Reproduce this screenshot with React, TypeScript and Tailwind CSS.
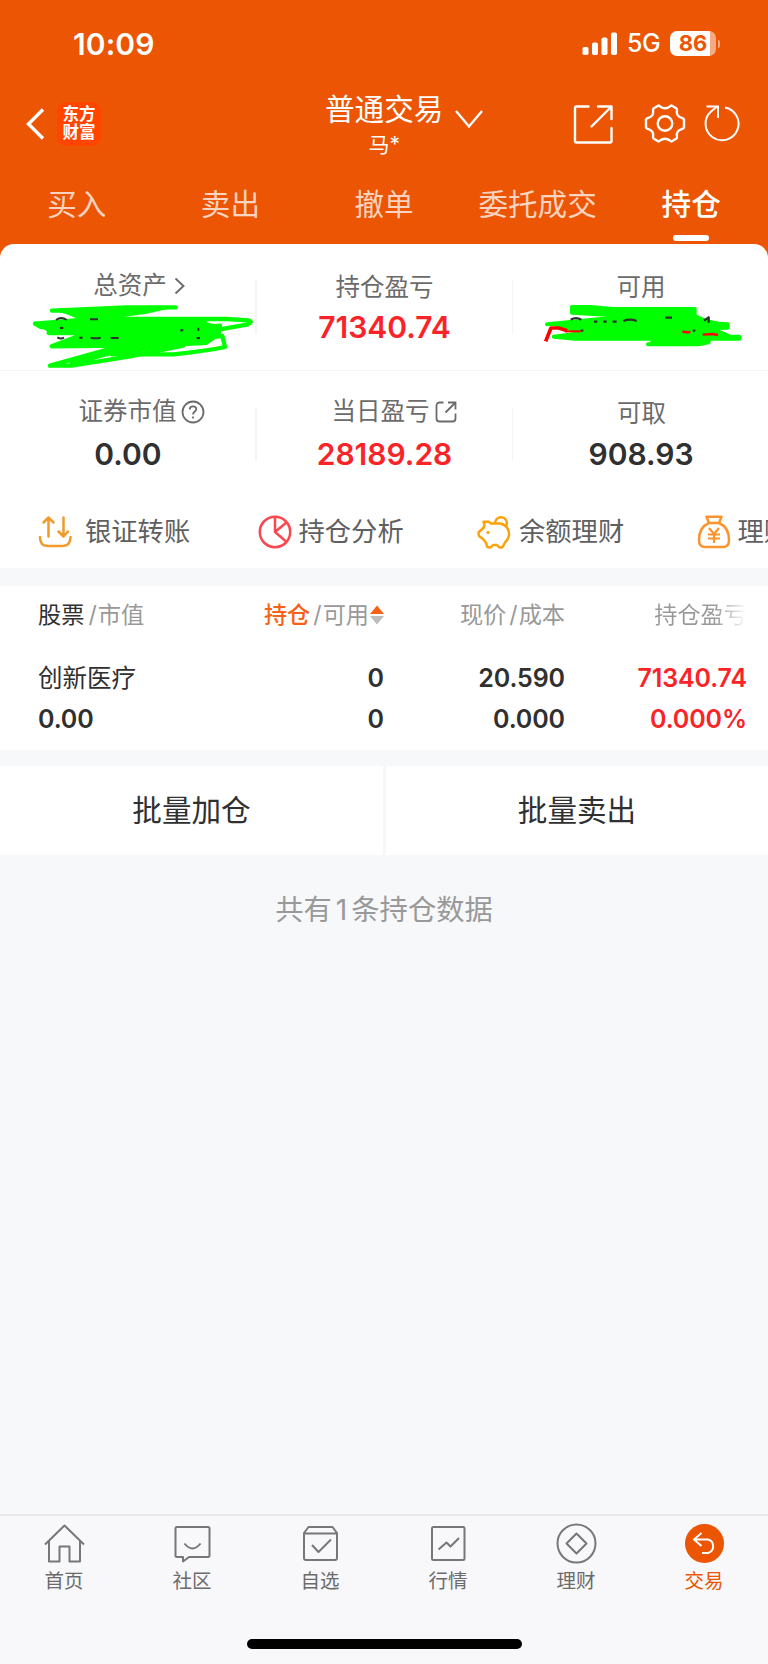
import type { ReactNode } from 'react'
import { clsx } from 'clsx'

const tabs = ['买入', '卖出', '撤单', '委托成交', '持仓']

function StatusBar() {
  return (
    <div className="flex h-[87px] items-center justify-between pl-[73px] pr-[48px]">
      <span className="text-[30px] font-semibold leading-none tracking-[0.1px]">10:09</span>
      <div className="flex items-center">
        <svg width="36" height="24" viewBox="0 0 36 24" fill="currentColor">
          <rect x="0.5" y="15" width="6" height="8" rx="1.8" />
          <rect x="10" y="10.5" width="6" height="12.5" rx="1.8" />
          <rect x="19.5" y="5.5" width="6" height="17.5" rx="1.8" />
          <rect x="29" y="0.5" width="6" height="22.5" rx="1.8" />
        </svg>
        <span className="ml-[9px] w-[43px] text-[25px] font-medium leading-none tracking-[-0.5px]">5G</span>
        <div className="flex h-[25px] w-[46px] items-center justify-center rounded-[7px] bg-linear-to-r from-white from-[86%] to-white/50 to-[86%]">
          <span className="text-[22px] font-bold leading-[25px] text-[#eb5503]">86</span>
        </div>
        <span className="ml-[1.5px] h-[8px] w-[2.5px] rounded-r-full bg-white/50" />
      </div>
    </div>
  )
}

function TitleBar() {
  return (
    <div className="flex h-[83px] pt-[1px]">
      <div className="flex w-[322px] pl-[25px] pt-[14px]">
        <svg className="mt-[5px]" width="20" height="34" viewBox="0 0 20 34" fill="none" stroke="currentColor" strokeWidth="3.4">
          <path d="M18 2.5 3.500 17 18 31.500" />
        </svg>
        <div className="ml-[12px] h-[44px] w-[44px] rounded-[9px] bg-[#ff4500] pt-[4px] text-center text-[16.5px] font-bold leading-[17.5px]">
          东方
          <br />
          财富
        </div>
      </div>
      <div className="flex w-[239px] pl-[3px]">
        <div className="flex flex-col items-center">
          <span className="mt-[4px] text-[29.600px] leading-[34px]">普通交易</span>
          <span className="mt-[6px] text-[21px] leading-[26px]">马*</span>
        </div>
        <svg className="ml-[11px] mt-[20px]" width="30" height="22" viewBox="0 0 30 22" fill="none" stroke="currentColor" strokeWidth="2.4">
          <path d="M2 3 15 18.500 28 3" />
        </svg>
      </div>
      <div className="flex pl-[12px] pt-[15px]">
        <svg width="42" height="42" viewBox="0 0 42 42" fill="none" stroke="currentColor" strokeWidth="2.400" strokeLinecap="round" strokeLinejoin="round">
          <path d="M15.500 3.500h-12a1.500 1.500 0 0 0-1.500 1.500v33a1.500 1.500 0 0 0 1.500 1.500h33.500a1.500 1.500 0 0 0 1.500-1.500V25" />
          <path d="M25 3.500h13.500V16M38 4 18.500 23.500" />
        </svg>
        <svg className="ml-[29px]" width="42" height="42" viewBox="0 0 42 42" fill="none" stroke="currentColor" strokeWidth="2.400" strokeLinejoin="round">
          <path d="M14.500 2.500c1.500 0 2 2.800 6.500 2.800s5-2.800 6.500-2.800l5 3c1.500 1-.8 3.500 1 6.500 2 3.300 6 2.500 6.500 4.500v8c-.5 2-4.500 1.200-6.500 4.500-1.800 3 .5 5.500-1 6.500l-5 3c-1.500 0-2-2.800-6.500-2.800s-5 2.800-6.500 2.800l-5-3c-1.500-1 .8-3.500-1-6.500-2-3.300-6-2.500-6.500-4.500v-8c.5-2 4.500-1.200 6.500-4.500 1.800-3-.5-5.500 1-6.500z" />
          <circle cx="21" cy="20.500" r="7.300" />
        </svg>
        <svg className="ml-[17px]" width="40" height="42" viewBox="0 0 40 42" fill="none" stroke="currentColor" strokeWidth="2">
          <path d="M22 4.500A16.500 16.500 0 1 1 8 8.500L13.500 4" />
          <path d="M3.500 3.500H15V15" />
        </svg>
      </div>
    </div>
  )
}

function Tabs() {
  return (
    <div className="grid h-[90px] grid-cols-[repeat(5,153.600px)]">
      {tabs.map((tab, i) => (
        <div
          key={tab}
          className={clsx('flex flex-col items-center pt-[16px]', i === 4 ? 'font-medium text-white' : 'text-white/75')}
        >
          <span className="whitespace-nowrap text-[29.600px] leading-[36px]">{tab}</span>
          {i === 4 && <span className="mt-[13px] h-[6px] w-[36px] rounded-full bg-white" />}
        </div>
      ))}
    </div>
  )
}

interface StatProps {
  label: string
  value?: string
  red?: boolean
  icon?: ReactNode
  labelClass?: string
  children?: ReactNode
}

function Stat({ label, value, red, icon, labelClass, children }: StatProps) {
  return (
    <div className="relative flex w-[255px] flex-col items-center pl-[1px] pt-[28px]">
      <div className={clsx('flex h-[30px] items-center text-[24.500px] text-[#6b6b6b]', labelClass)}>
        {label}
        {icon}
      </div>
      <div
        className={clsx(
          'mt-[8px] h-[34px] text-[30px] font-semibold leading-[34px]',
          red ? 'text-[#fa2428]' : 'text-[#303030]'
        )}
      >
        {value}
      </div>
      {children}
    </div>
  )
}

function Divider() {
  return <span className="mt-[36px] h-[54px] w-[1.500px] shrink-0 bg-[#f4f4f5]" />
}

// Hand-drawn marker over the total assets figure
function LeftScribble() {
  return (
    <svg className="absolute left-[20px] top-[51px]" width="240" height="80" viewBox="0 0 720 240" fill="none" strokeLinecap="round" strokeLinejoin="round">
      <path d="M92 44 330 34 470 36 380 56 310 66H560V82L602 92 604 120 560 150 490 154 380 168 300 184 272 180 300 158H150L95 156 180 116 90 115 60 96 45 86 180 74 140 58Z" fill="#00ff00" />
      <g stroke="#00ff00" strokeWidth="13">
        <path d="M467 37H320L96 47H240L180 60 400 42" />
        <path d="M45 86 220 72H620L685 76Q700 80 684 88L600 103 550 108M45 86 62 96H200M86 114H200L95 154 300 152" />
        <path d="M600 92 540 98M520 130 607 123 615 156Q560 168 460 178H275L300 154" />
        <path d="M90 212 290 156M90 212H155L330 184 490 152M155 206 300 166" />
      </g>
      <g stroke="#303030" strokeWidth="6" strokeLinecap="butt">
        <path d="M108 75q16-12 32 0M210 73h24M112 127q10 6 20 1M178 128h10M212 128q14 4 30 0M272 129h24M120 99h10M481 106h9M535 98v10M530 129h10" />
      </g>
    </svg>
  )
}

// Marker over the available funds figure
function RightScribble() {
  return (
    <svg className="absolute left-[17px] top-[51px]" width="220" height="60" viewBox="0 0 660 180" fill="none" strokeLinecap="round" strokeLinejoin="round">
      <path d="M122 32H180L250 38H498V66L540 84 595 88V102H562L605 122 630 131H540L535 146 355 148 365 134H130L70 125 130 112 110 104 50 88 220 70 240 62 122 56Z" fill="#00ff00" />
      <g stroke="#00ff00" strokeWidth="12">
        <path d="M126 36H180L250 42H494V60H240L126 53Z" />
        <path d="M51 88 220 71 330 66M500 66Q540 86 593 88V98L540 100 600 125H628V131H135L71 125 130 118M354 148H505L536 142V130" />
      </g>
      <g stroke="#303030" strokeWidth="7" strokeLinecap="butt">
        <path d="M122 74q16-9 32 0M192 80h10M220 80h10M248 80h12M280 78q20-8 40 0M406 68h20M522 77l14-10v16M152 107h8M488 107h8" />
      </g>
      <g stroke="#ff0000" strokeWidth="11" strokeLinecap="butt">
        <path d="M47 139 63 99H86L112 107" />
        <path d="M105 109H152" strokeWidth="6" />
        <path d="M457 109q10 4 24 2M518 119l30-2 16 3" strokeWidth="7" />
      </g>
    </svg>
  )
}

function Summary() {
  return (
    <section className="rounded-t-[14px] bg-white">
      <div className="flex h-[126.500px] border-b-[1.500px] border-[#f4f4f5]">
        <Stat
          label="总资产"
          labelClass="-mt-[2px] mb-[2px] pl-[22px]"
          icon={
            <svg className="ml-[7px] mt-[1px]" width="11" height="18" viewBox="0 0 11 18" fill="none" stroke="currentColor" strokeWidth="1.900">
              <path d="m1.500 1.500 8 7.500-8 7.500" />
            </svg>
          }
        >
          <LeftScribble />
        </Stat>
        <Divider />
        <Stat label="持仓盈亏" value="71340.74" red />
        <Divider />
        <Stat label="可用">
          <RightScribble />
        </Stat>
      </div>
      <div className="flex h-[117px]">
        <Stat
          label="证券市值"
          value="0.00"
          labelClass="-mt-[2px] mb-[2px] pl-[27px]"
          icon={
            <svg className="ml-[4px]" width="24" height="24" viewBox="0 0 24 24" fill="none" stroke="currentColor" strokeWidth="1.800">
              <circle cx="12" cy="12" r="10.500" />
              <path d="M8.700 9.500C8.700 7.500 10 6.300 12 6.300s3.300 1.200 3.300 2.900c0 2.300-3.300 2.500-3.300 5.300M12 16.500v2" />
            </svg>
          }
        />
        <Divider />
        <Stat
          label="当日盈亏"
          value="28189.28"
          red
          labelClass="-mt-[2px] mb-[2px] pl-[20px]"
          icon={
            <svg className="ml-[4px]" width="24" height="24" viewBox="0 0 24 24" fill="none" stroke="currentColor" strokeWidth="1.800">
              <path d="M9.500 2.500h-4a3 3 0 0 0-3 3v13a3 3 0 0 0 3 3h13a3 3 0 0 0 3-3v-5M14 2.500h7.500v7M21.500 2.500l-10 10" />
            </svg>
          }
        />
        <Divider />
        <Stat label="可取" value="908.93" labelClass="pl-[1px]" />
      </div>
    </section>
  )
}

const shortcuts = [
  {
    text: '银证转账',
    gap: 'ml-[13px]',
    icon: (
      <svg width="34" height="34" viewBox="0 0 34 34" fill="none" stroke="#f39a2b" strokeWidth="2.500" strokeLinecap="round" strokeLinejoin="round">
        <path d="M10.500 21.500V2.500M5.500 7.500l5-5 5 5M25.500 2.500v19M20.500 16.500l5 5 4.500-5" />
        <path d="M2 22q0 9 7.500 9h15q8 0 8-9" />
      </svg>
    )
  },
  {
    text: '持仓分析',
    gap: 'ml-[7px]',
    icon: (
      <svg width="34" height="34" viewBox="0 0 34 34" fill="none" stroke="#fb4850" strokeWidth="2.500">
        <circle cx="17" cy="17" r="15.200" />
        <path d="M17 2v15l11 9.500M17 17 29 7" />
      </svg>
    )
  },
  {
    text: '余额理财',
    gap: 'ml-[8px]',
    icon: (
      <svg width="34" height="34" viewBox="0 0 34 34" fill="none" stroke="#fda20a" strokeWidth="2.500" strokeLinecap="round" strokeLinejoin="round">
        <path d="M6.500 6.800h5.200L14 8.500h9c6 1 9.500 6 9 11.500-.4 4-2.800 6-4 7.500l-2 4q-1 1.500-4 .8l-2-2.300h-4l-2 2.300q-3 .7-4-.8l-.8-3.500L6 24l-3.500-2.500Q1 19 1.800 17L6.500 13l1-3z" />
        <path d="M18 7.500a6 6 0 1 1 11.500 3" />
        <circle cx="11" cy="17.500" r="1.200" fill="#fda20a" strokeWidth="1" />
      </svg>
    )
  },
  {
    text: '理财',
    gap: 'ml-[7px]',
    icon: (
      <svg width="34" height="34" viewBox="0 0 34 34" fill="none" stroke="#fc942d" strokeWidth="2.500" strokeLinejoin="round">
        <path d="M9.500 1.700h15L22 8H12zM12 8C5 11 2 18 2 25q0 7 6 7h18q6 0 6-7c0-7-3-14-10-17" />
        <path d="m12 13 5 6 5-6M11 19.500h12M11 23.500h12M17 19v9" strokeWidth="2.200" />
      </svg>
    )
  }
]

function Shortcuts() {
  return (
    <div className="flex h-[80px] overflow-hidden bg-white pl-[38px] pt-[8px]">
      {shortcuts.map((item) => (
        <div key={item.text} className="flex w-[219.500px] shrink-0 items-center">
          {item.icon}
          <span className={clsx('whitespace-nowrap text-[26.300px] text-[#606060]', item.gap)}>{item.text}</span>
        </div>
      ))}
    </div>
  )
}

function Holdings() {
  return (
    <section className="mt-[18.500px] h-[164px] bg-white px-[38px] pr-[21px]">
      <div className="grid h-[58px] grid-cols-[150px_196px_181px_182px] items-center text-[23.200px] text-[#999]">
        <div>
          <span className="text-[#303030]">股票</span>
          <span className="ml-[4px] mr-[1px]">/</span>市值
        </div>
        <div className="flex items-center justify-end">
          <span className="font-medium text-[#f76219]">持仓</span>
          <span className="ml-[3px] mr-[1px]">/</span>可用
          <svg className="ml-[1px]" width="14" height="22" viewBox="0 0 14 22">
            <path d="M7 1.500 14 10H0z" fill="#f76219" />
            <path d="M7 20.500 0 12h14z" fill="#bdbdbd" />
          </svg>
        </div>
        <div className="text-right">
          现价<span className="ml-[3px] mr-[1px]">/</span>成本
        </div>
        <div className="bg-linear-to-r from-[#999] from-[82%] to-[#fff] bg-clip-text text-right text-transparent">
          持仓盈亏
        </div>
      </div>
      <div className="mt-[14px] grid grid-cols-[150px_196px_181px_182px] text-[25px] font-semibold leading-[40.500px] tracking-[-0.100px] text-[#303030]">
        <span className="text-[24.500px] font-normal tracking-normal">创新医疗</span>
        <span className="text-right">0</span>
        <span className="text-right">20.590</span>
        <span className="text-right text-[#fa2428]">71340.74</span>
        <span>0.00</span>
        <span className="text-right">0</span>
        <span className="text-right">0.000</span>
        <span className="text-right text-[#fa2428]">0.000%</span>
      </div>
    </section>
  )
}

const navItems = [
  {
    text: '首页',
    icon: <path d="M1 21.500 20.500 2.500 40 21.500M5 18v20.500h10.500v-15h10v15H36V18" />
  },
  {
    text: '社区',
    icon: (
      <>
        <path d="M5 4h31a1.500 1.500 0 0 1 1.500 1.500v27A1.500 1.500 0 0 1 36 34H17l-6 4.500V34H5a1.500 1.500 0 0 1-1.500-1.500v-27A1.500 1.500 0 0 1 5 4z" />
        <path d="M12.500 20.500q8 10 16 0" />
      </>
    )
  },
  {
    text: '自选',
    icon: (
      <>
        <path d="M8.500 4h24l4.500 6v25a2 2 0 0 1-2 2H6a2 2 0 0 1-2-2V10zM4 10.500h33" />
        <path d="m12 22 6.500 7L31 16.500" />
      </>
    )
  },
  {
    text: '行情',
    icon: (
      <>
        <rect x="4" y="4" width="32.500" height="33" rx="1.500" />
        <path d="m10.500 26.500 8-7 4 4L31 15" />
      </>
    )
  },
  {
    text: '理财',
    icon: (
      <>
        <circle cx="20.500" cy="20.500" r="19" />
        <path d="m20.500 10.500 10 10-10 10-10-10z" />
      </>
    )
  },
  {
    text: '交易',
    active: true,
    icon: (
      <>
        <circle cx="20.500" cy="20.500" r="19.500" fill="#eb5503" stroke="none" />
        <path d="M17.500 10 10 16.500l7.500 6.500M10 16.500h14a7 7 0 0 1 0 13.500h-6" stroke="#fff" />
      </>
    )
  }
]

function BottomNav() {
  return (
    <nav className="flex h-[150px] flex-col items-center border-t-2 border-[#e8e8ec] bg-[#f8f8fa]">
      <div className="grid w-full grid-cols-6">
        {navItems.map((item) => (
          <div key={item.text} className="flex flex-col items-center pt-[7px]">
            <svg width="41" height="41" viewBox="0 0 41 41" fill="none" stroke="#777" strokeWidth="2" strokeLinejoin="round">
              {item.icon}
            </svg>
            <span className={clsx('mt-[3px] text-[19.500px] leading-[28px]', item.active ? 'text-[#eb5503]' : 'text-[#6b6b6b]')}>
              {item.text}
            </span>
          </div>
        ))}
      </div>
      <span className="mt-[44px] h-[10px] w-[275px] rounded-full bg-black" />
    </nav>
  )
}

export default function App() {
  return (
    <div className="flex h-[1664px] w-[768px] flex-col overflow-hidden bg-[#f7f8fa] font-['Inter','Noto_Sans_CJK_SC',sans-serif]">
      <div className="bg-[#eb5503]">
        <header className="h-[244px] text-white">
          <StatusBar />
          <TitleBar />
          <Tabs />
        </header>
        <Summary />
      </div>
      <Shortcuts />
      <Holdings />
      <div className="mt-[15.500px] grid h-[89px] grid-cols-[383px_382px] gap-[3px] text-[29.600px] text-[#303030]">
        <button className="bg-white">批量加仓</button>
        <button className="bg-white">批量卖出</button>
      </div>
      <p className="mt-[35px] flex-1 text-center text-[28.300px] leading-[40px] text-[#999]">
        共有<span className="mx-[4px]">1</span>条持仓数据
      </p>
      <BottomNav />
    </div>
  )
}
